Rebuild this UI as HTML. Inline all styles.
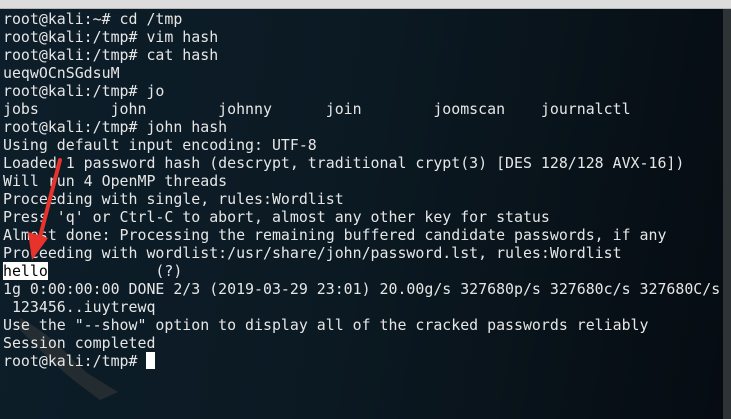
<!DOCTYPE html>
<html><head><style>
html,body{margin:0;padding:0;width:731px;height:419px;overflow:hidden;background:#0c1820}
.menu{position:absolute;left:0;top:0;width:731px;height:8px;background:#dcdcdc;border-bottom:1px solid #b8b8b8}
.term{position:absolute;left:0;top:9px;width:723px;height:410px;background:linear-gradient(100deg,#0d1e2a 0%,#0b1922 50%,#060c12 100%)}
.sb{position:absolute;left:723px;top:9px;width:8px;height:410px;background:#2e3336}
pre{position:absolute;left:3px;top:10px;margin:0;font-family:"DejaVu Sans Mono","Liberation Mono",monospace;font-size:14.9px;line-height:18px;color:#e6e6e6}
.hl{background:#fff;color:#000}
.cur{display:inline-block;width:9px;height:17px;background:#fff;vertical-align:-3px}
svg{position:absolute;left:0;top:0}
</style></head><body>
<div class="menu"></div>
<div class="term"></div>
<div class="sb"></div>
<svg width="731" height="419">
<path d="M20 318 C60 340,70 360,90 375 L118 392 L100 400 L80 385 C60 370,40 350,20 330Z" fill="#3a3a3a" opacity="0.55"/>
</svg>
<pre>root@kali:~# cd /tmp
root@kali:/tmp# vim hash
root@kali:/tmp# cat hash
ueqwOCnSGdsuM
root@kali:/tmp# jo
jobs        john        johnny      join        joomscan    journalctl
root@kali:/tmp# john hash
Using default input encoding: UTF-8
Loaded 1 password hash (descrypt, traditional crypt(3) [DES 128/128 AVX-16])
Will run 4 OpenMP threads
Proceeding with single, rules:Wordlist
Press 'q' or Ctrl-C to abort, almost any other key for status
Almost done: Processing the remaining buffered candidate passwords, if any
Proceeding with wordlist:/usr/share/john/password.lst, rules:Wordlist
<span class="hl">hello</span>            (?)
1g 0:00:00:00 DONE 2/3 (2019-03-29 23:01) 20.00g/s 327680p/s 327680c/s 327680C/s
 123456..iuytrewq
Use the "--show" option to display all of the cracked passwords reliably
Session completed
root@kali:/tmp# <span class="cur"></span></pre>
<svg width="731" height="419">
<path d="M60 160 L40 237" stroke="#e8322c" stroke-width="4" stroke-linecap="round"/>
<path d="M32 260 L28 232 L48 238Z" fill="#e8322c"/>
</svg>
</body></html>
